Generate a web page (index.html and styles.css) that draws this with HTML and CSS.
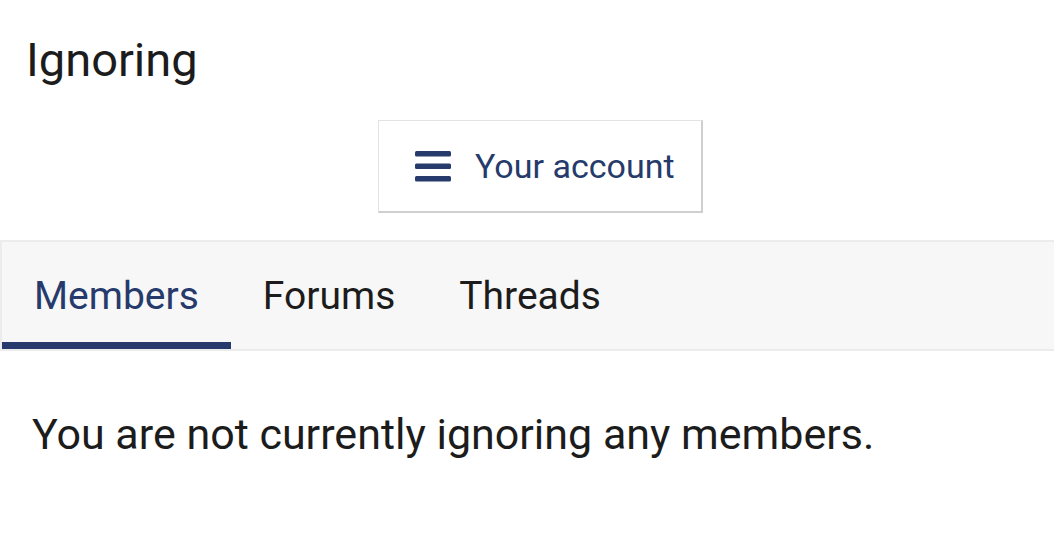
FILE: index.html
```html
<!DOCTYPE html>
<html lang="en">
<head>
<meta charset="utf-8">
<title>Ignoring</title>
<link rel="stylesheet" href="styles.css">
</head>
<body>
<div class="page">
  <h1 class="title">Ignoring</h1>
  <div class="menu-row">
    <button class="menu-btn" type="button">
      <svg class="menu-icon" width="36" height="31" viewBox="0 0 36 31" aria-hidden="true">
        <rect x="0" y="0" width="36" height="5.5" rx="1.5" fill="#263a6b"/>
        <rect x="0" y="12.5" width="36" height="5.5" rx="1.5" fill="#263a6b"/>
        <rect x="0" y="25" width="36" height="5.5" rx="1.5" fill="#263a6b"/>
      </svg>
      <span class="menu-label">Your account</span>
    </button>
  </div>
  <nav class="tabs">
    <a class="tab active">Members</a>
    <a class="tab">Forums</a>
    <a class="tab">Threads</a>
  </nav>
  <p class="empty">You are not currently ignoring any members.</p>
</div>
</body>
</html>
```

FILE: styles.css
```css
* { box-sizing: border-box; }
html, body { margin: 0; padding: 0; background: #ffffff; }
body {
  font-family: Roboto, "Liberation Sans", Arial, sans-serif;
  color: #1c1c1c;
  width: 1054px;
  overflow: hidden;
}
.page {
  display: flex;
  flex-direction: column;
}
.title {
  margin: 32px 0 0 0;
  padding-left: 26px;
  font-size: 47px;
  line-height: 56px;
  font-weight: 400;
  color: #1c1c1c;
}
.menu-row {
  display: flex;
  justify-content: center;
  padding-left: 27px;
  margin-top: 32px;
}
.menu-btn {
  display: flex;
  align-items: center;
  gap: 24px;
  height: 93px;
  width: 325px;
  padding: 0 0 0 36px;
  background: #ffffff;
  border: 1px solid #e3e3e3;
  border-right: 2px solid #cfcfcf;
  border-bottom: 2px solid #cfcfcf;
  font-family: inherit;
  cursor: pointer;
}
.menu-icon { display: block; flex: none; }
.menu-label {
  font-size: 34px;
  color: #263a6b;
  line-height: 40px;
}
.tabs {
  display: flex;
  margin-top: 27px;
  background: #f7f7f7;
  border-top: 2px solid #ececec;
  border-left: 2px solid #ececec;
  border-bottom: 2px solid #ececec;
  height: 111px;
}
.tab {
  display: flex;
  align-items: center;
  padding: 0 32px;
  font-size: 39px;
  color: #1c1c1c;
  border-bottom: 7px solid transparent;
  padding-top: 7px;
}
.tab.active {
  color: #263a6b;
  border-bottom-color: #263a6b;
}
.empty {
  margin: 58px 0 0 0;
  padding-left: 32px;
  font-size: 43px;
  line-height: 50px;
  color: #1c1c1c;
}
```
